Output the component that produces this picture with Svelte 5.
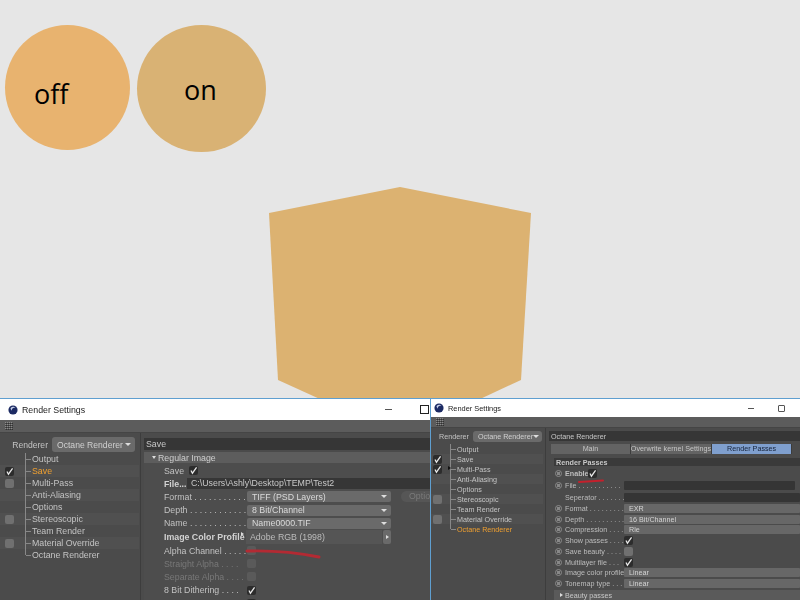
<script>
  const treeA = [
    { n: 'Output' }, { n: 'Save', c: 1, on: 1 }, { n: 'Multi-Pass', c: 2 }, { n: 'Anti-Aliasing' }, { n: 'Options' },
    { n: 'Stereoscopic', c: 2 }, { n: 'Team Render' }, { n: 'Material Override', c: 2 }, { n: 'Octane Renderer' }
  ];
  const treeB = [
    { n: 'Output' }, { n: 'Save', c: 1 }, { n: 'Multi-Pass', c: 1, m: 1 }, { n: 'Anti-Aliasing' }, { n: 'Options' },
    { n: 'Stereoscopic', c: 2 }, { n: 'Team Render' }, { n: 'Material Override', c: 2 }, { n: 'Octane Renderer', on: 1 }
  ];
  const dots = (n) => ' .'.repeat(n);
  const passes = [
    { l: 'Format', d: 9, v: 'EXR', t: 'dd' }, { l: 'Depth', d: 10, v: '16 Bit/Channel', t: 'dd' }, { l: 'Compression', d: 4, v: 'Rle', t: 'dd' },
    { l: 'Show passes', d: 4, t: 'on' }, { l: 'Save beauty', d: 4, t: 'off' }, { l: 'Multilayer file', d: 3, t: 'on' },
    { l: 'Image color profile', d: 0, v: 'Linear', t: 'dd' }, { l: 'Tonemap type', d: 3, v: 'Linear', t: 'dd' }
  ];
</script>

{#snippet check()}
  <span class="cb on"><svg viewBox="0 0 10 10" width="9" height="9"><path d="M2.2 5 L3.8 8 L8.4 1.6" fill="none" stroke="#e8e8e8" stroke-width="1.4"/></svg></span>
{/snippet}

{#snippet logo()}
  <svg class="logo" viewBox="0 0 12 12" width="10" height="10"><circle cx="6" cy="6" r="5.5" fill="#1c2a63"/><path d="M3 4 A4 4 0 0 1 9 3 A5 5 0 0 0 4 7 Z" fill="#c8d2ec"/></svg>
{/snippet}

{#snippet tree(items)}
  <div class="tree">
    {#each items as it}
      <div class="row">
        <div class="chk">
          {#if it.c === 1}{@render check()}{:else if it.c === 2}<span class="cb idle"></span>{/if}
        </div>
        <div class="branch">{#if it.m}<em class="tri right fold"></em>{/if}</div>
        <span class:active={it.on}>{it.n}</span>
      </div>
    {/each}
  </div>
{/snippet}

<div class="stage">
  <div class="circle off">off</div>
  <div class="circle onc">on</div>
  <svg class="shape" viewBox="0 0 800 600" width="800" height="600"><polygon points="269,213 400,187 531,213 521,380 478,400 322,400 278,380" fill="#dcb271"/></svg>

  <section class="win a">
    <header class="title">{@render logo()}<span>Render Settings</span><i class="min"></i><i class="max"></i></header>
    <div class="toolbar"><b class="grip"></b></div>
    <div class="body">
      <aside class="side">
        <div class="renderer"><span>Renderer</span><div class="rbtn">Octane Renderer<em></em></div></div>
        {@render tree(treeA)}
      </aside>
      <main class="panel">
        <div class="head">Save</div>
        <div class="group"><em class="tri"></em>Regular Image</div>
        <div class="form">
          <div class="f"><span class="lbl short">Save</span>{@render check()}</div>
          <div class="f filerow"><span class="lbl strong">File...</span><div class="path">C:\Users\Ashly\Desktop\TEMP\Test2</div></div>
          <div class="f"><span class="lbl">Format{dots(11)}</span><div class="dd">TIFF (PSD Layers)<em></em></div><div class="optbtn">Optio</div></div>
          <div class="f"><span class="lbl">Depth{dots(12)}</span><div class="dd">8 Bit/Channel<em></em></div></div>
          <div class="f"><span class="lbl">Name{dots(12)}</span><div class="dd">Name0000.TIF<em></em></div></div>
          <div class="f prof"><span class="lbl strong">Image Color Profile</span><em class="tri right mark"></em><div class="pv">Adobe RGB (1998)</div><div class="pb"><em class="tri right"></em></div></div>
          <div class="f"><span class="lbl">Alpha Channel{dots(5)}</span><span class="cb idle dim"></span></div>
          <div class="f muted"><span class="lbl">Straight Alpha{dots(4)}</span><span class="cb idle dim"></span></div>
          <div class="f muted"><span class="lbl">Separate Alpha{dots(4)}</span><span class="cb idle dim"></span></div>
          <div class="f"><span class="lbl">8 Bit Dithering{dots(4)}</span>{@render check()}</div>
          <div class="f tail">{@render check()}</div>
        </div>
      </main>
    </div>
  </section>

  <section class="win b">
    <header class="title">{@render logo()}<span>Render Settings</span><i class="min"></i><i class="max"></i></header>
    <div class="toolbar"><b class="grip"></b></div>
    <div class="body">
      <aside class="side">
        <div class="renderer"><span>Renderer</span><div class="rbtn">Octane Renderer<em></em></div></div>
        {@render tree(treeB)}
      </aside>
      <main class="panel">
        <div class="head">Octane Renderer</div>
        <div class="tabs"><div>Main</div><div>Overwrite kernel Settings</div><div class="sel">Render Passes</div></div>
        <div class="rp">
          <div class="head sub">Render Passes</div>
          <div class="p"><i class="radio"></i><span class="lbl strong">Enable</span>{@render check()}</div>
          <div class="p tall"><i class="radio"></i><span class="lbl">File{dots(11)}</span><div class="inp"></div></div>
          <div class="p tall"><i class="noradio"></i><span class="lbl">Seperator{dots(7)}</span><div class="inp full"></div></div>
          {#each passes as r}
            <div class="p pass"><i class="radio"></i><span class="lbl">{r.l}{dots(r.d)}</span>
              {#if r.t === 'dd'}<div class="pdd">{r.v}</div>{:else if r.t === 'on'}{@render check()}{:else}<span class="cb idle"></span>{/if}
            </div>
          {/each}
          <div class="beauty"><em class="tri right"></em>Beauty passes</div>
        </div>
      </main>
    </div>
  </section>

  <svg class="marks" viewBox="0 0 800 600" width="800" height="600">
    <path d="M247 551 Q285 550 319 557" fill="none" stroke="#b32a33" stroke-width="3" stroke-linecap="round"/>
    <path d="M579 482 Q592 481 603 480.5" fill="none" stroke="#c4202c" stroke-width="2" stroke-linecap="round"/>
  </svg>
</div>

<style>
  :global(body) { margin: 0; background: #e6e6e6; }
  .stage { position: relative; width: 800px; height: 600px; overflow: hidden; background: #e6e6e6; font-family: "Open Sans", "Noto Sans", sans-serif; }
  .circle { position: absolute; border-radius: 50%; color: #000; font-size: 27px; line-height: 1; display: flex; box-sizing: border-box; }
  .off { left: 5px; top: 25px; width: 125px; height: 125px; background: #e8b36f; padding: 55px 0 0 29px; }
  .onc { left: 137px; top: 25px; width: 129px; height: 127px; background: #d9b274; padding: 51px 0 0 47px; }
  .shape, .marks { position: absolute; left: 0; top: 0; }
  .marks { pointer-events: none; }

  .win { position: absolute; top: 398px; height: 202px; display: flex; flex-direction: column; background: #4b4b4b; overflow: hidden; border-top: 1px solid #5f9fd0; filter: blur(0.4px); font-family: "Liberation Sans", Arial, sans-serif; white-space: nowrap; }
  .a { left: 0; width: 430px; }
  .b { left: 430px; width: 370px; border-left: 1px solid #5f9fd0; box-sizing: border-box; }
  .title { background: #fff; color: #222; display: flex; align-items: center; flex: none; }
  .a .title { height: 21px; padding-left: 8px; gap: 4px; font-size: 8.8px; }
  .b .title { height: 18px; padding-left: 3px; gap: 4px; font-size: 7.4px; }
  .min { background: #555; height: 1px; margin-left: auto; }
  .max { border: 1px solid #222; box-sizing: border-box; }
  .a .min { width: 7px; margin-right: 24px; }
  .a .max { width: 9px; height: 9px; margin-right: 1px; }
  .b .min { width: 6px; margin-right: 20px; }
  .b .max { width: 7px; height: 7px; margin-right: 15px; border-color: #555; border-radius: 1px; }
  .logo { flex: none; }
  .toolbar { background: #5c5c5c; flex: none; display: flex; align-items: center; padding-left: 5px; border-bottom: 1px solid #454545; }
  .a .toolbar { height: 12px; }
  .b .toolbar { height: 10px; }
  .grip { width: 8px; height: 8px; background: repeating-linear-gradient(0deg, #8a8a8a 0 1px, transparent 1px 2px), repeating-linear-gradient(90deg, #8a8a8a 0 1px, #5c5c5c 1px 2px); background-blend-mode: multiply; }
  .body { flex: 1; display: flex; min-height: 0; color: #c4c4c4; }
  .side { flex: none; box-sizing: border-box; border-right: 1px solid #3d3d3d; }
  .a .side { width: 141px; padding-top: 4px; }
  .b .side { width: 115px; padding-top: 3px; }
  .renderer { display: flex; align-items: center; justify-content: flex-end; gap: 4px; }
  .a .renderer { height: 15px; font-size: 8.6px; margin: 0 5px 1px 0; }
  .b .renderer { height: 11px; font-size: 7.2px; margin: 0 3px 2px 0; }
  .rbtn { background: #6a6a6a; border-radius: 3px; color: #d0d0d0; display: flex; align-items: center; justify-content: space-between; box-sizing: border-box; padding: 0 4px 0 5px; height: 100%; }
  .a .rbtn { width: 83px; }
  .b .rbtn { width: 69px; }
  .rbtn em, .dd em { width: 0; height: 0; border-left: 3px solid transparent; border-right: 3px solid transparent; border-top: 3px solid #ddd; }
  .a .tree { font-size: 8.8px; width: 139px; --h: 12px; --left: 25px; }
  .b .tree { font-size: 7.2px; width: 112px; --h: 10px; --left: 19px; }
  .row { height: var(--h); display: flex; align-items: center; position: relative; }
  .row:nth-child(even) { background: #505050; }
  .chk { width: var(--left); flex: none; display: flex; padding-left: 4px; box-sizing: border-box; }
  .a .chk { padding-left: 5px; }
  .b .chk { padding-left: 2px; }
  .branch { width: 5px; height: 100%; margin-right: 1px; border-left: 1px solid #888; position: relative; flex: none; }
  .branch::after { content: ""; position: absolute; left: 0; right: 0; top: 50%; height: 1px; background: #888; }
  .row:last-child .branch { height: 50%; align-self: flex-start; }
  .row:last-child .branch::after { top: 100%; }
  .fold { position: absolute; left: -3px; top: 2px; border-left-color: #111 !important; z-index: 1; }
  .active { color: #f0a030; }
  .cb { display: inline-flex; width: 9px; height: 9px; border-radius: 2px; flex: none; }
  .cb.on { background: #2c2c2c; }
  .cb.idle { background: #707070; }
  .cb.dim { background: #5a5a5a; }
  .panel { flex: 1; min-width: 0; }
  .a .panel { padding: 5px 0 0 3px; font-size: 8.8px; }
  .b .panel { padding: 3px 0 0 3px; font-size: 7.2px; }
  .head { background: #363636; color: #c8c8c8; display: flex; align-items: center; padding-left: 2px; }
  .a .head { height: 12px; }
  .b .head { height: 10px; }
  .group { background: #5d5d5d; height: 11px; margin-top: 2px; display: flex; align-items: center; gap: 2px; padding-left: 8px; color: #cfcfcf; }
  .tri { width: 0; height: 0; border-left: 2.5px solid transparent; border-right: 2.5px solid transparent; border-top: 3px solid #ddd; flex: none; }
  .tri.right { border: none; border-top: 2.5px solid transparent; border-bottom: 2.5px solid transparent; border-left: 3px solid #ddd; }
  .form { padding: 1px 0 0 20px; background: #4d4d4d; }
  .f { height: 13.2px; display: flex; align-items: center; position: relative; }
  .lbl { display: block; flex: none; overflow: visible; }
  .f .lbl { width: 83px; color: #c2c2c2; }
  .f .lbl.short { width: 22px; margin-right: 3px; }
  .filerow .lbl { width: 21px; margin-right: 2px; }
  .lbl.strong { font-weight: 700; color: #d2d2d2; }
  .f.muted .lbl { color: #787878; }
  .tail { padding-left: 83px; }
  .path { flex: 1; background: #363636; height: 11px; line-height: 11px; padding-left: 4px; color: #c8c8c8; }
  .dd { flex: none; width: 144px; height: 11px; background: #6a6a6a; border-radius: 2px; color: #dadada; display: flex; align-items: center; justify-content: space-between; padding: 0 4px 0 5px; box-sizing: border-box; }
  .optbtn { margin-left: 10px; flex: none; width: 40px; height: 11px; border-radius: 6px 0 0 6px; background: #565656; color: #7b7b7b; line-height: 11px; padding-left: 8px; box-sizing: border-box; }
  .f.prof { height: 14px; }
  .f.prof .lbl { width: 77px; }
  .mark { margin: -6px 2px 0 0; }
  .pv { flex: none; width: 136px; height: 14px; background: #555; color: #bcbcbc; line-height: 14px; padding-left: 4px; box-sizing: border-box; }
  .pb { flex: none; width: 8px; height: 14px; margin-left: 1px; background: #6a6a6a; border-radius: 2px; display: flex; align-items: center; justify-content: center; }
  .tabs { display: flex; margin: 3px 8px 0 2px; height: 10px; }
  .tabs div { flex: 1; background: #636363; color: #c6c6c6; text-align: center; line-height: 10px; border-right: 1px solid #3c3c3c; }
  .tabs .sel { background: #7f9fce; color: #16233a; }
  .rp { margin: 4px 0 0 5px; }
  .p { height: 11px; display: flex; align-items: center; }
  .p.tall { height: 12px; }
  .p.pass { height: 10.75px; }
  .b .head.sub { height: 8px; margin-bottom: 2px; background: #3a3a3a; font-weight: 700; }
  .radio, .noradio { width: 7px; height: 7px; flex: none; margin: 0 3px 0 1px; box-sizing: border-box; border-radius: 50%; }
  .radio { border: 1px solid #8b8b8b; background: radial-gradient(circle, #888 0 1.5px, #4b4b4b 2px); }
  .p .lbl { width: 58px; color: #bdbdbd; margin-right: 1px; }
  .p .lbl.strong { width: 22px; margin-right: 1px; }
  .inp { flex: none; width: 171px; height: 9px; background: #353535; border-radius: 1px; }
  .inp.full { flex: 1; width: auto; }
  .pdd { flex: 1; height: 9px; background: #676767; color: #d4d4d4; line-height: 9px; padding-left: 5px; border-radius: 1px; }
  .beauty { height: 10px; margin-top: 1px; background: #5a5a5a; display: flex; align-items: center; gap: 2px; padding-left: 6px; color: #c8c8c8; }
</style>
